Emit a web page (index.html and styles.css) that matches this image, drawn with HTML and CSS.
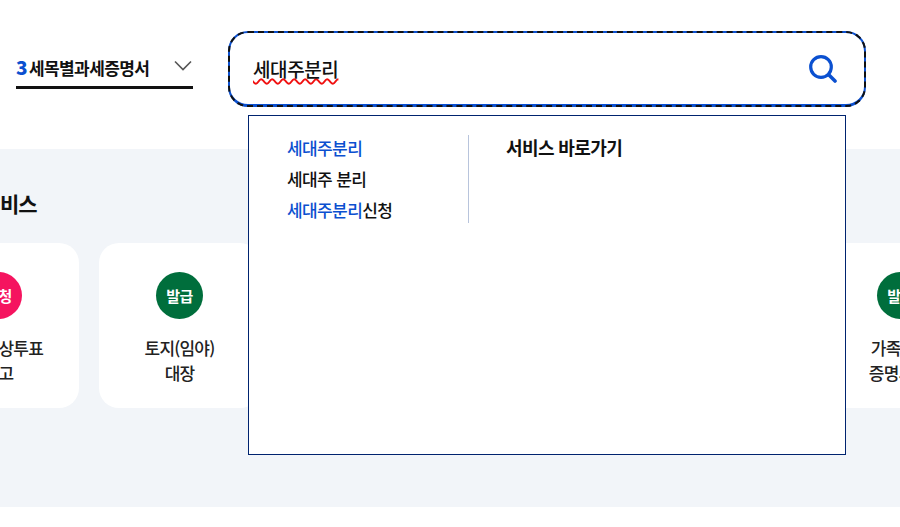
FILE: index.html
```html
<!DOCTYPE html>
<html lang="ko">
<head>
    <meta charset="UTF-8">
    <title>통합검색</title>
    <link rel="stylesheet" href="styles.css">
</head>
<body>
    <div id="page">
        <header class="search-bar">
            <div class="scope">
                <span class="scope-label"><b>3</b>세목별과세증명서</span>
                <svg class="chevron" width="20" height="12" viewBox="0 0 20 12">
                    <path d="M2 1.5 L10 9.5 L18 1.5" fill="none" stroke="#555" stroke-width="1.6"/>
                </svg>
            </div>
            <div class="search-box">
                <span class="query">세대주분리</span>
                <svg class="search-icon" width="28" height="28" viewBox="0 0 28 28">
                    <circle cx="12" cy="12" r="10.3" fill="none" stroke="#0b50d0" stroke-width="3.2"/>
                    <path d="M20 20 L26 26" fill="none" stroke="#0b50d0" stroke-width="3.6" stroke-linecap="round"/>
                </svg>
            </div>
        </header>

        <section class="services">
            <h2>비스</h2>
            <div class="cards">
                <div class="card">
                    <span class="badge badge-red">신청</span>
                    <p>재산세상투표<br>신고</p>
                </div>
                <div class="card card-mid">
                    <span class="badge badge-green">발급</span>
                    <p>토지(임야)<br>대장</p>
                </div>
                <div class="card card-right">
                    <span class="badge badge-green">발급</span>
                    <p>가족관계<br>증명서 등</p>
                </div>
            </div>
        </section>

        <div class="suggest">
            <div class="suggest-list">
                <a class="hit">세대주분리</a>
                <a>세대주 분리</a>
                <a><span class="hit">세대주분리</span>신청</a>
            </div>
            <div class="suggest-side">
                <strong>서비스 바로가기</strong>
            </div>
        </div>
    </div>
</body>
</html>
```

FILE: styles.css
```css
body, html {
    height: 100%;
    margin: 0;
    padding: 0;
    font-family: "Noto Sans CJK KR", sans-serif;
    overflow: hidden;
    background-color: #fff;
    color: #111;
}
#page {
    position: relative;
    width: 900px;
    height: 527px;
    overflow: hidden;
}
.search-bar {
    display: flex;
    height: 149px;
    box-sizing: border-box;
    padding: 31px 0 0 16px;
    background-color: #fff;
}
.scope {
    display: flex;
    justify-content: space-between;
    width: 177px;
    height: 58px;
    box-sizing: border-box;
    padding-top: 22px;
    border-bottom: 3px solid #111;
}
.scope-label {
    font-size: 17px;
    line-height: 27px;
    font-weight: 700;
    letter-spacing: -0.6px;
    white-space: nowrap;
}
.scope-label b {
    margin-right: 2px;
    color: #0b50d0;
    font-size: 19px;
}
.chevron {
    margin-top: 7px;
}
.search-box {
    display: flex;
    justify-content: space-between;
    align-items: center;
    width: 638px;
    height: 76px;
    box-sizing: border-box;
    margin-left: 35px;
    padding: 0 27px 0 23px;
    border: solid #0b50d0;
    border-width: 2px 2px 3px;
    border-radius: 20px;
    outline: 2px dashed #111;
    outline-offset: -2px;
}
.query {
    font-size: 19px;
    font-weight: 500;
    letter-spacing: -0.4px;
    text-decoration: underline wavy #f01010;
    text-decoration-thickness: 1.5px;
    text-underline-offset: 1px;
}
.services {
    height: 358px;
    background-color: #f2f5f9;
    overflow: hidden;
}
.services h2 {
    margin: 39px 0 0 0;
    font-size: 21px;
    line-height: 30px;
    font-weight: 700;
    letter-spacing: -1px;
}
.cards {
    display: flex;
    justify-content: space-between;
    width: 1063px;
    margin: 25px 0 0 -82px;
}
.card {
    width: 161px;
    height: 165px;
    box-sizing: border-box;
    padding-top: 29px;
    border-radius: 20px;
    background-color: #fff;
    text-align: center;
}
.card-mid {
    margin-right: auto;
    margin-left: 20px;
}
.badge {
    display: flex;
    justify-content: center;
    align-items: center;
    width: 47px;
    height: 47px;
    margin: 0 auto;
    border-radius: 50%;
    color: #fff;
    font-size: 15px;
    font-weight: 700;
    letter-spacing: -0.5px;
}
.badge-red {
    background-color: #f5145f;
}
.badge-green {
    background-color: #006e3c;
}
.card p {
    margin: 16px 0 0;
    font-size: 17px;
    font-weight: 500;
    line-height: 25px;
    letter-spacing: -0.8px;
    color: #222;
}
.suggest {
    position: absolute;
    top: 115px;
    left: 248px;
    display: flex;
    width: 598px;
    height: 340px;
    box-sizing: border-box;
    padding-top: 19px;
    border: 1px solid #00236f;
    background-color: #fff;
}
.suggest-list {
    display: flex;
    flex-direction: column;
    gap: 6px;
    width: 220px;
    height: 88px;
    box-sizing: border-box;
    padding-left: 38px;
    border-right: 1px solid #b8c4dc;
}
.suggest-list a {
    font-size: 17px;
    font-weight: 500;
    line-height: 25px;
    letter-spacing: -0.6px;
    white-space: nowrap;
}
.suggest-list .hit {
    color: #0b50d0;
}
.suggest-side {
    padding-left: 37px;
    line-height: 24px;
}
.suggest-side strong {
    font-size: 18px;
    letter-spacing: -0.6px;
}
```
